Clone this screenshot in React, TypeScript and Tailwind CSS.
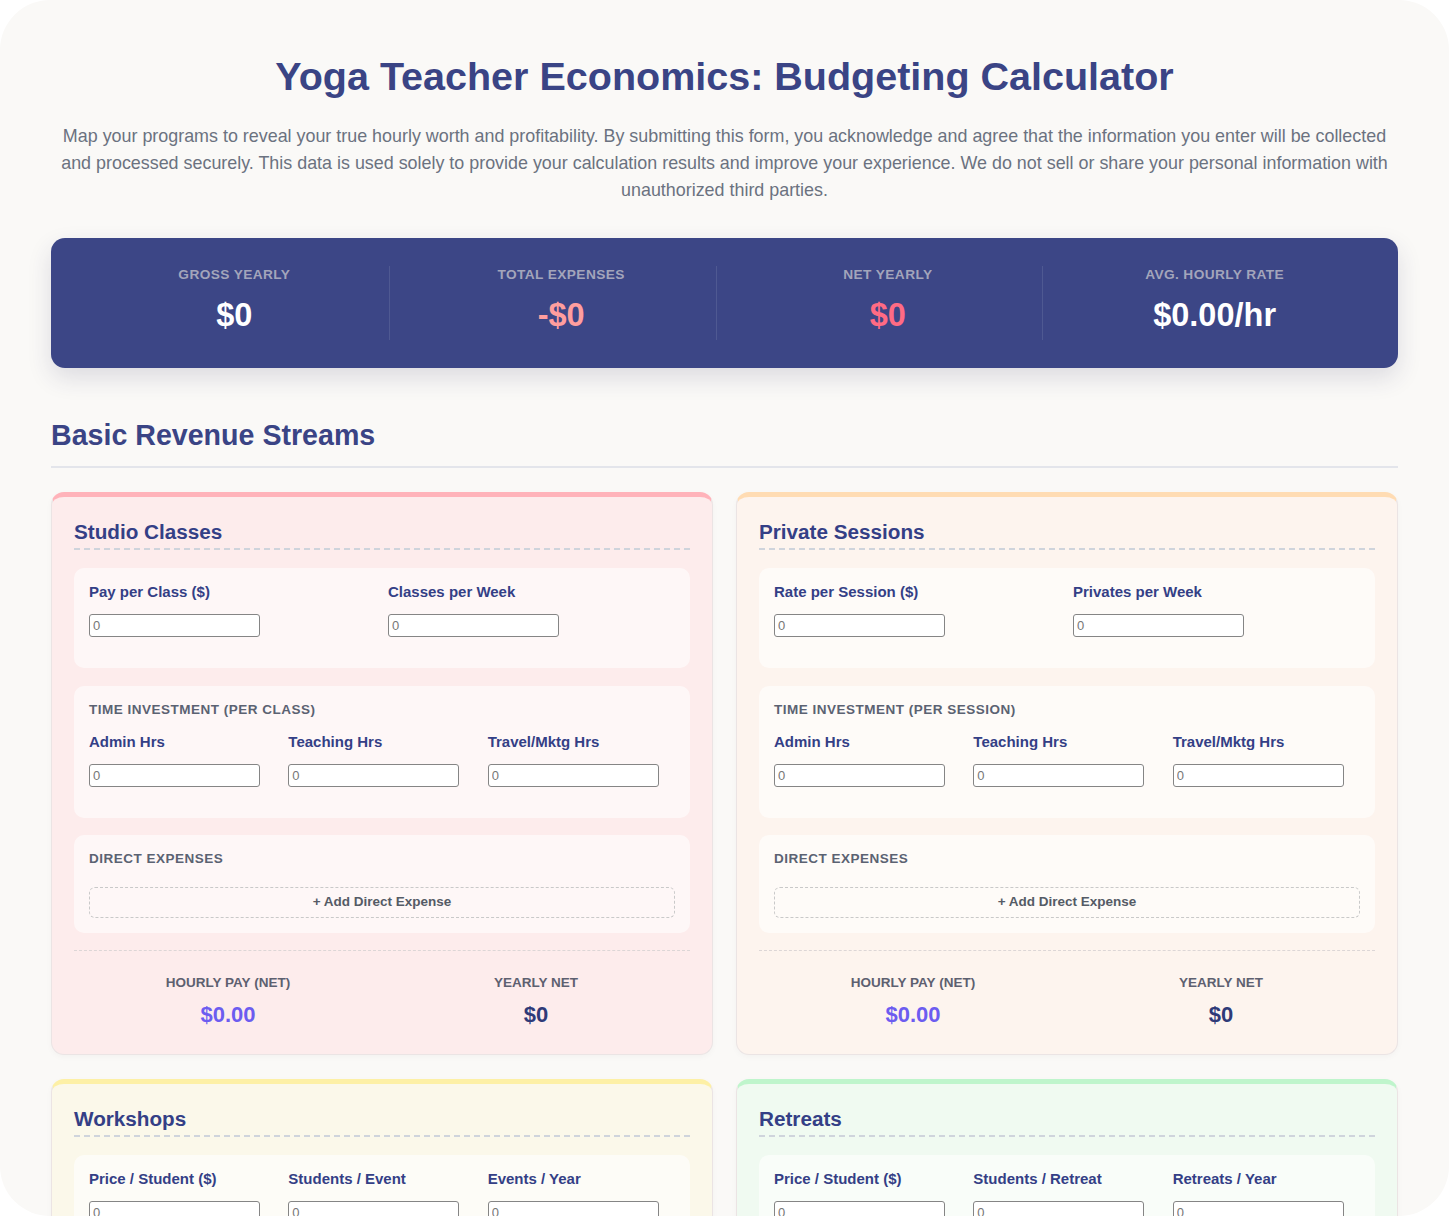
import React from 'react';

type Stream = {
  title: string;
  card: string;
  per: string;
  fields: string[];
  cols: string;
};

const STREAMS: Stream[] = [
  {
    title: 'Studio Classes',
    card: 'bg-[#fdecec] border-t-[#ffb3ba]',
    per: 'Time Investment (per class)',
    fields: ['Pay per Class ($)', 'Classes per Week'],
    cols: 'grid-cols-2',
  },
  {
    title: 'Private Sessions',
    card: 'bg-[#fdf4ee] border-t-[#ffdcb3]',
    per: 'Time Investment (per session)',
    fields: ['Rate per Session ($)', 'Privates per Week'],
    cols: 'grid-cols-2',
  },
  {
    title: 'Workshops',
    card: 'bg-[#fbf8ea] border-t-[#fdf0a6]',
    per: 'Time Investment (per event)',
    fields: ['Price / Student ($)', 'Students / Event', 'Events / Year'],
    cols: 'grid-cols-3',
  },
  {
    title: 'Retreats',
    card: 'bg-[#f0faf1] border-t-[#bff5cc]',
    per: 'Time Investment (per retreat)',
    fields: ['Price / Student ($)', 'Students / Retreat', 'Retreats / Year'],
    cols: 'grid-cols-3',
  },
];

const SUMMARY = [
  { label: 'Gross Yearly', value: '$0', color: 'text-white' },
  { label: 'Total Expenses', value: '-$0', color: 'text-[#ff9e9e]' },
  { label: 'Net Yearly', value: '$0', color: 'text-[#ff6b84]' },
  { label: 'Avg. Hourly Rate', value: '$0.00/hr', color: 'text-white' },
];

const Field = ({ label }: { label: string }) => (
  <div className="pb-[16px]">
    <label className="block text-[15px] leading-[18px] font-bold text-[#343f86] mb-[13px]">
      {label}
    </label>
    <input
      type="text"
      placeholder="0"
      className="block w-[171px] h-[23px] rounded-[3px] border border-[#858585] bg-white px-[3px] text-[13px] text-[#555] placeholder:text-[#777] outline-none"
    />
  </div>
);

const BoxHeading = ({ children }: { children: React.ReactNode }) => (
  <h4 className="text-[13.5px] leading-[16px] font-bold uppercase tracking-[0.5px] text-[#5b6272]">
    {children}
  </h4>
);

const StreamCard = ({ stream }: { stream: Stream }) => (
  <div
    className={`rounded-[13px] border border-[#ebe4e4] border-t-[5px] shadow-[0_2px_6px_rgba(0,0,0,0.03)] px-[22px] pt-[23px] pb-[25px] ${stream.card}`}
  >
    <h3 className="text-[20.7px] leading-[24px] font-bold text-[#343f86] pb-[4px] border-b-2 border-dashed border-[#cfd4dc]">
      {stream.title}
    </h3>

    <div className={`mt-[18px] rounded-[10px] bg-white/60 p-[15px] grid gap-x-[12px] ${stream.cols}`}>
      {stream.fields.map((f) => (
        <Field key={f} label={f} />
      ))}
    </div>

    <div className="mt-[18px] rounded-[10px] bg-white/60 p-[15px] pt-[16px]">
      <BoxHeading>{stream.per}</BoxHeading>
      <div className="mt-[15px] grid grid-cols-3 gap-x-[12px]">
        <Field label="Admin Hrs" />
        <Field label="Teaching Hrs" />
        <Field label="Travel/Mktg Hrs" />
      </div>
    </div>

    <div className="mt-[17px] rounded-[10px] bg-white/60 p-[15px] pt-[16px]">
      <BoxHeading>Direct Expenses</BoxHeading>
      <button className="mt-[20px] w-full h-[31px] rounded-[6px] border border-dashed border-[#c9c9c9] text-[13.5px] font-bold text-[#555b66]">
        + Add Direct Expense
      </button>
    </div>

    <div className="mt-[17px] border-t border-dashed border-[#dcd6d6] pt-[24px] grid grid-cols-2">
      <div className="flex flex-col items-center">
        <span className="text-[13.5px] leading-[16px] font-bold uppercase text-[#5d6070]">
          Hourly Pay (Net)
        </span>
        <span className="mt-[10px] text-[22px] leading-[28px] font-bold text-[#6c5cf0]">$0.00</span>
      </div>
      <div className="flex flex-col items-center">
        <span className="text-[13.5px] leading-[16px] font-bold uppercase text-[#5d6070]">
          Yearly Net
        </span>
        <span className="mt-[10px] text-[22px] leading-[28px] font-bold text-[#2f3a78]">$0</span>
      </div>
    </div>
  </div>
);

export default function App() {
  return (
    <div className="bg-white font-['Liberation_Sans',Arial,Helvetica,sans-serif]">
      <div className="h-[1216px] overflow-hidden rounded-[50px] bg-[#faf9f7] px-[51px] pt-[52px]">
        <h1 className="text-center text-[39.5px] leading-[48px] font-bold text-[#3a4485]">
          Yoga Teacher Economics: Budgeting Calculator
        </h1>
        <p className="mt-[23px] px-[4px] text-center text-[17.9px] leading-[27px] text-[#6b7280]">
          Map your programs to reveal your true hourly worth and profitability. By submitting this
          form, you acknowledge and agree that the information you enter will be collected and
          processed securely. This data is used solely to provide your calculation results and
          improve your experience. We do not sell or share your personal information with
          unauthorized third parties.
        </p>

        <div className="mt-[34px] h-[130px] rounded-[14px] bg-[#3c4686] shadow-[0_10px_24px_rgba(40,45,90,0.14)] px-[20px] grid grid-cols-4 items-center">
          {SUMMARY.map((s, i) => (
            <div key={s.label} className="relative h-[74px] flex flex-col items-center">
              {i > 0 && <span className="absolute left-[-9px] top-0 bottom-0 w-px bg-[#4f5992]" />}
              <span className="text-[13.7px] leading-[18px] font-bold uppercase tracking-[0.4px] text-[#a3a5bb]">
                {s.label}
              </span>
              <span className={`mt-[11px] text-[32.5px] leading-[40px] font-bold ${s.color}`}>
                {s.value}
              </span>
            </div>
          ))}
        </div>

        <h2 className="mt-[50px] pb-[14px] border-b-2 border-[#e3e5eb] text-[28.6px] leading-[34px] font-bold text-[#3a4485]">
          Basic Revenue Streams
        </h2>

        <div className="mt-[24px] grid grid-cols-2 gap-x-[23px] gap-y-[24px]">
          {STREAMS.map((s) => (
            <StreamCard key={s.title} stream={s} />
          ))}
        </div>
      </div>
    </div>
  );
}
